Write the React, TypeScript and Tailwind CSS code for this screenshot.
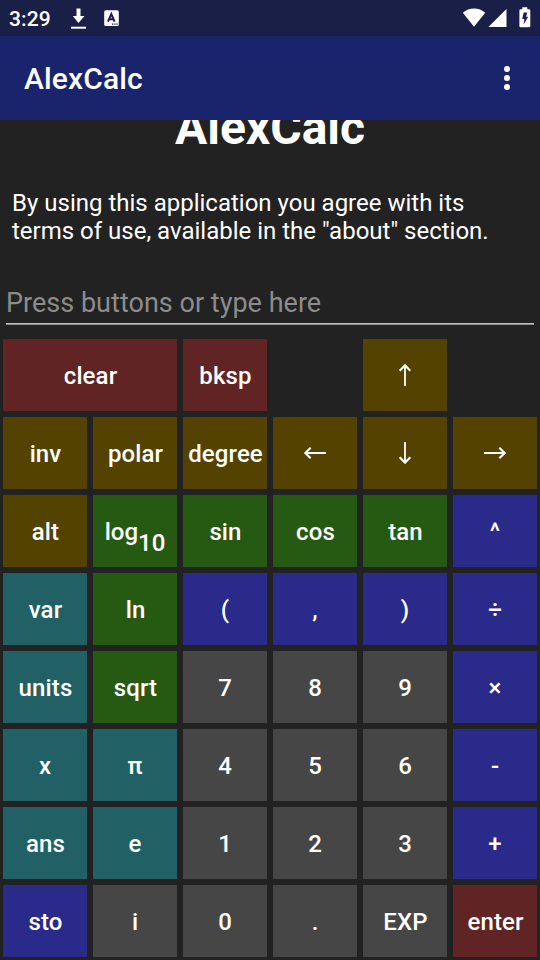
import React from "react";

type Tone = "red" | "gold" | "green" | "blue" | "teal" | "gray";
type Dir = "up" | "down" | "left" | "right";

const tones: Record<Tone, string> = {
  red: "bg-[#602424]",
  gold: "bg-[#544300]",
  green: "bg-[#265a13]",
  blue: "bg-[#2a2a8a]",
  teal: "bg-[#216064]",
  gray: "bg-[#464646]",
};

const turns: Record<Dir, string> = {
  up: "rotate-0",
  right: "rotate-90",
  down: "rotate-180",
  left: "-rotate-90",
};

interface Key {
  label: React.ReactNode;
  tone: Tone;
  wide?: boolean;
}

function Arrow({ dir }: { dir: Dir }) {
  return (
    <svg
      viewBox="0 0 24 24"
      className={`mb-[3px] size-6 ${turns[dir]}`}
      fill="none"
      stroke="white"
      strokeWidth="1.8"
    >
      <path d="M12 23V2" />
      <path d="M6.700 7.700L12 2.300l5.300 5.400" strokeWidth="2.1" />
    </svg>
  );
}

const k = (label: React.ReactNode, tone: Tone, wide = false): Key => ({ label, tone, wide });

const keys: (Key | null)[] = [
  k("clear", "red", true), k("bksp", "red"), null, k(<Arrow dir="up" />, "gold"), null,
  k("inv", "gold"), k("polar", "gold"), k("degree", "gold"),
  k(<Arrow dir="left" />, "gold"), k(<Arrow dir="down" />, "gold"), k(<Arrow dir="right" />, "gold"),
  k("alt", "gold"),
  k(<span>log<span className="relative top-[11px]">10</span></span>, "green"),
  k("sin", "green"), k("cos", "green"), k("tan", "green"), k("^", "blue"),
  k("var", "teal"), k("ln", "green"), k("(", "blue"), k(",", "blue"), k(")", "blue"), k("÷", "blue"),
  k("units", "teal"), k("sqrt", "green"), k("7", "gray"), k("8", "gray"), k("9", "gray"), k("×", "blue"),
  k("x", "teal"), k("π", "teal"), k("4", "gray"), k("5", "gray"), k("6", "gray"), k("-", "blue"),
  k("ans", "teal"), k("e", "teal"), k("1", "gray"), k("2", "gray"), k("3", "gray"), k("+", "blue"),
  k("sto", "blue"), k("i", "gray"), k("0", "gray"), k(".", "gray"), k("EXP", "gray"), k("enter", "red"),
];

const isWord = (label: React.ReactNode) => typeof label === "string" && label.length > 1;

function StatusBar() {
  return (
    <div className="flex h-9 shrink-0 items-center bg-[#1a1f48] text-white">
      <span className="ml-[9px] w-[61px] pt-[2px] text-[21px] leading-[34px] font-medium tracking-[0.15px]">3:29</span>
      <svg width="16" height="22" viewBox="0 0 16 22" fill="white">
        <path d="M6.500 1.500h4v7.500h4L8.500 16 2.800 9h3.700z" />
        <path d="M1 19.700h15v2H1z" />
      </svg>
      <svg className="ml-[18px]" width="16" height="18" viewBox="0 0 16 18">
        <rect x=".2" y="1.300" width="14.600" height="15.700" rx="1.500" fill="white" />
        <path d="M4 12.600L7.300 5l3.300 7.600M5.200 10.300h4.200" fill="none" stroke="#1a1f48" strokeWidth="2" />
        <path d="M8 15.200h1.300M10.200 15.200h1.300M12.400 15.200h1.300" stroke="#1a1f48" strokeWidth="1.200" />
      </svg>
      <div className="ml-auto flex items-center pr-[9px]">
        <svg width="24" height="20" viewBox="0 0 24 20" fill="white">
          <path d="M12 18.800L.800 4.800Q5.500.400 12 .400t11.200 4.400z" />
        </svg>
        <svg className="ml-px" width="20" height="20" viewBox="0 0 20 20" fill="white">
          <path d="M19.500 1v18H1.300z" />
        </svg>
        <svg className="ml-3" width="12" height="22" viewBox="0 0 12 22">
          <path d="M3.300.300h5v2H10q1.300 0 1.300 1.300v15.400Q11.300 20.300 10 20.300H1.700Q.400 20.300.400 19V3.600Q.400 2.300 1.700 2.300h1.600z" fill="white" />
          <path d="M4.700 5.500h3.600L7 9.800h2.200L4.600 17.500l.8-5.500H3.200z" fill="#1a1f48" />
        </svg>
      </div>
    </div>
  );
}

export default function App() {
  return (
    <div className="flex h-[960px] w-[540px] flex-col overflow-hidden bg-[#222222] font-[Roboto,sans-serif] text-white">
      <StatusBar />
      <header className="flex h-[84px] shrink-0 items-center justify-between bg-[#1a246d] pl-6">
        <h1 className="pt-px text-[30px] leading-9 font-medium tracking-[0.12px]">AlexCalc</h1>
        <button aria-label="More options" className="mr-[30px] flex w-[6px] flex-col gap-[3px]">
          <span className="size-[6px] rounded-full bg-white" />
          <span className="size-[6px] rounded-full bg-white" />
          <span className="size-[6px] rounded-full bg-white" />
        </button>
      </header>

      <main className="h-[146px] shrink-0 overflow-hidden">
        <h2 className="-mt-[20px] text-center text-[48px] leading-[56px] font-bold">AlexCalc</h2>
        <p className="mt-[33px] pl-3 text-[24px] leading-7 whitespace-nowrap">
          By using this application you agree with its
          <br />
          terms of use, available in the "about" section.
        </p>
      </main>

      <div className="h-[70px] shrink-0 px-[6px] pt-[17px]">
        <input
          className="block h-[39px] w-full bg-transparent p-0 text-[27px] leading-8 tracking-[0.02px] outline-none placeholder:text-[#8c8c8c]"
          placeholder="Press buttons or type here"
        />
        <div className="mt-px h-px bg-[#bcbcbc]" />
        <div className="h-px bg-[#8c8c8c]" />
      </div>

      <div className="grid shrink-0 auto-rows-[72px] grid-cols-6 gap-[6px] px-[3px] pt-[3px]">
        {keys.map((key, i) =>
          key ? (
            <button
              key={i}
              className={`flex items-center justify-center pt-[2px] text-[24px] leading-7 font-medium ${tones[key.tone]} ${isWord(key.label) ? "pl-px tracking-[0.12px]" : ""} ${key.wide ? "col-span-2" : ""}`}
            >
              {key.label}
            </button>
          ) : (
            <span key={i} />
          ),
        )}
      </div>
    </div>
  );
}
